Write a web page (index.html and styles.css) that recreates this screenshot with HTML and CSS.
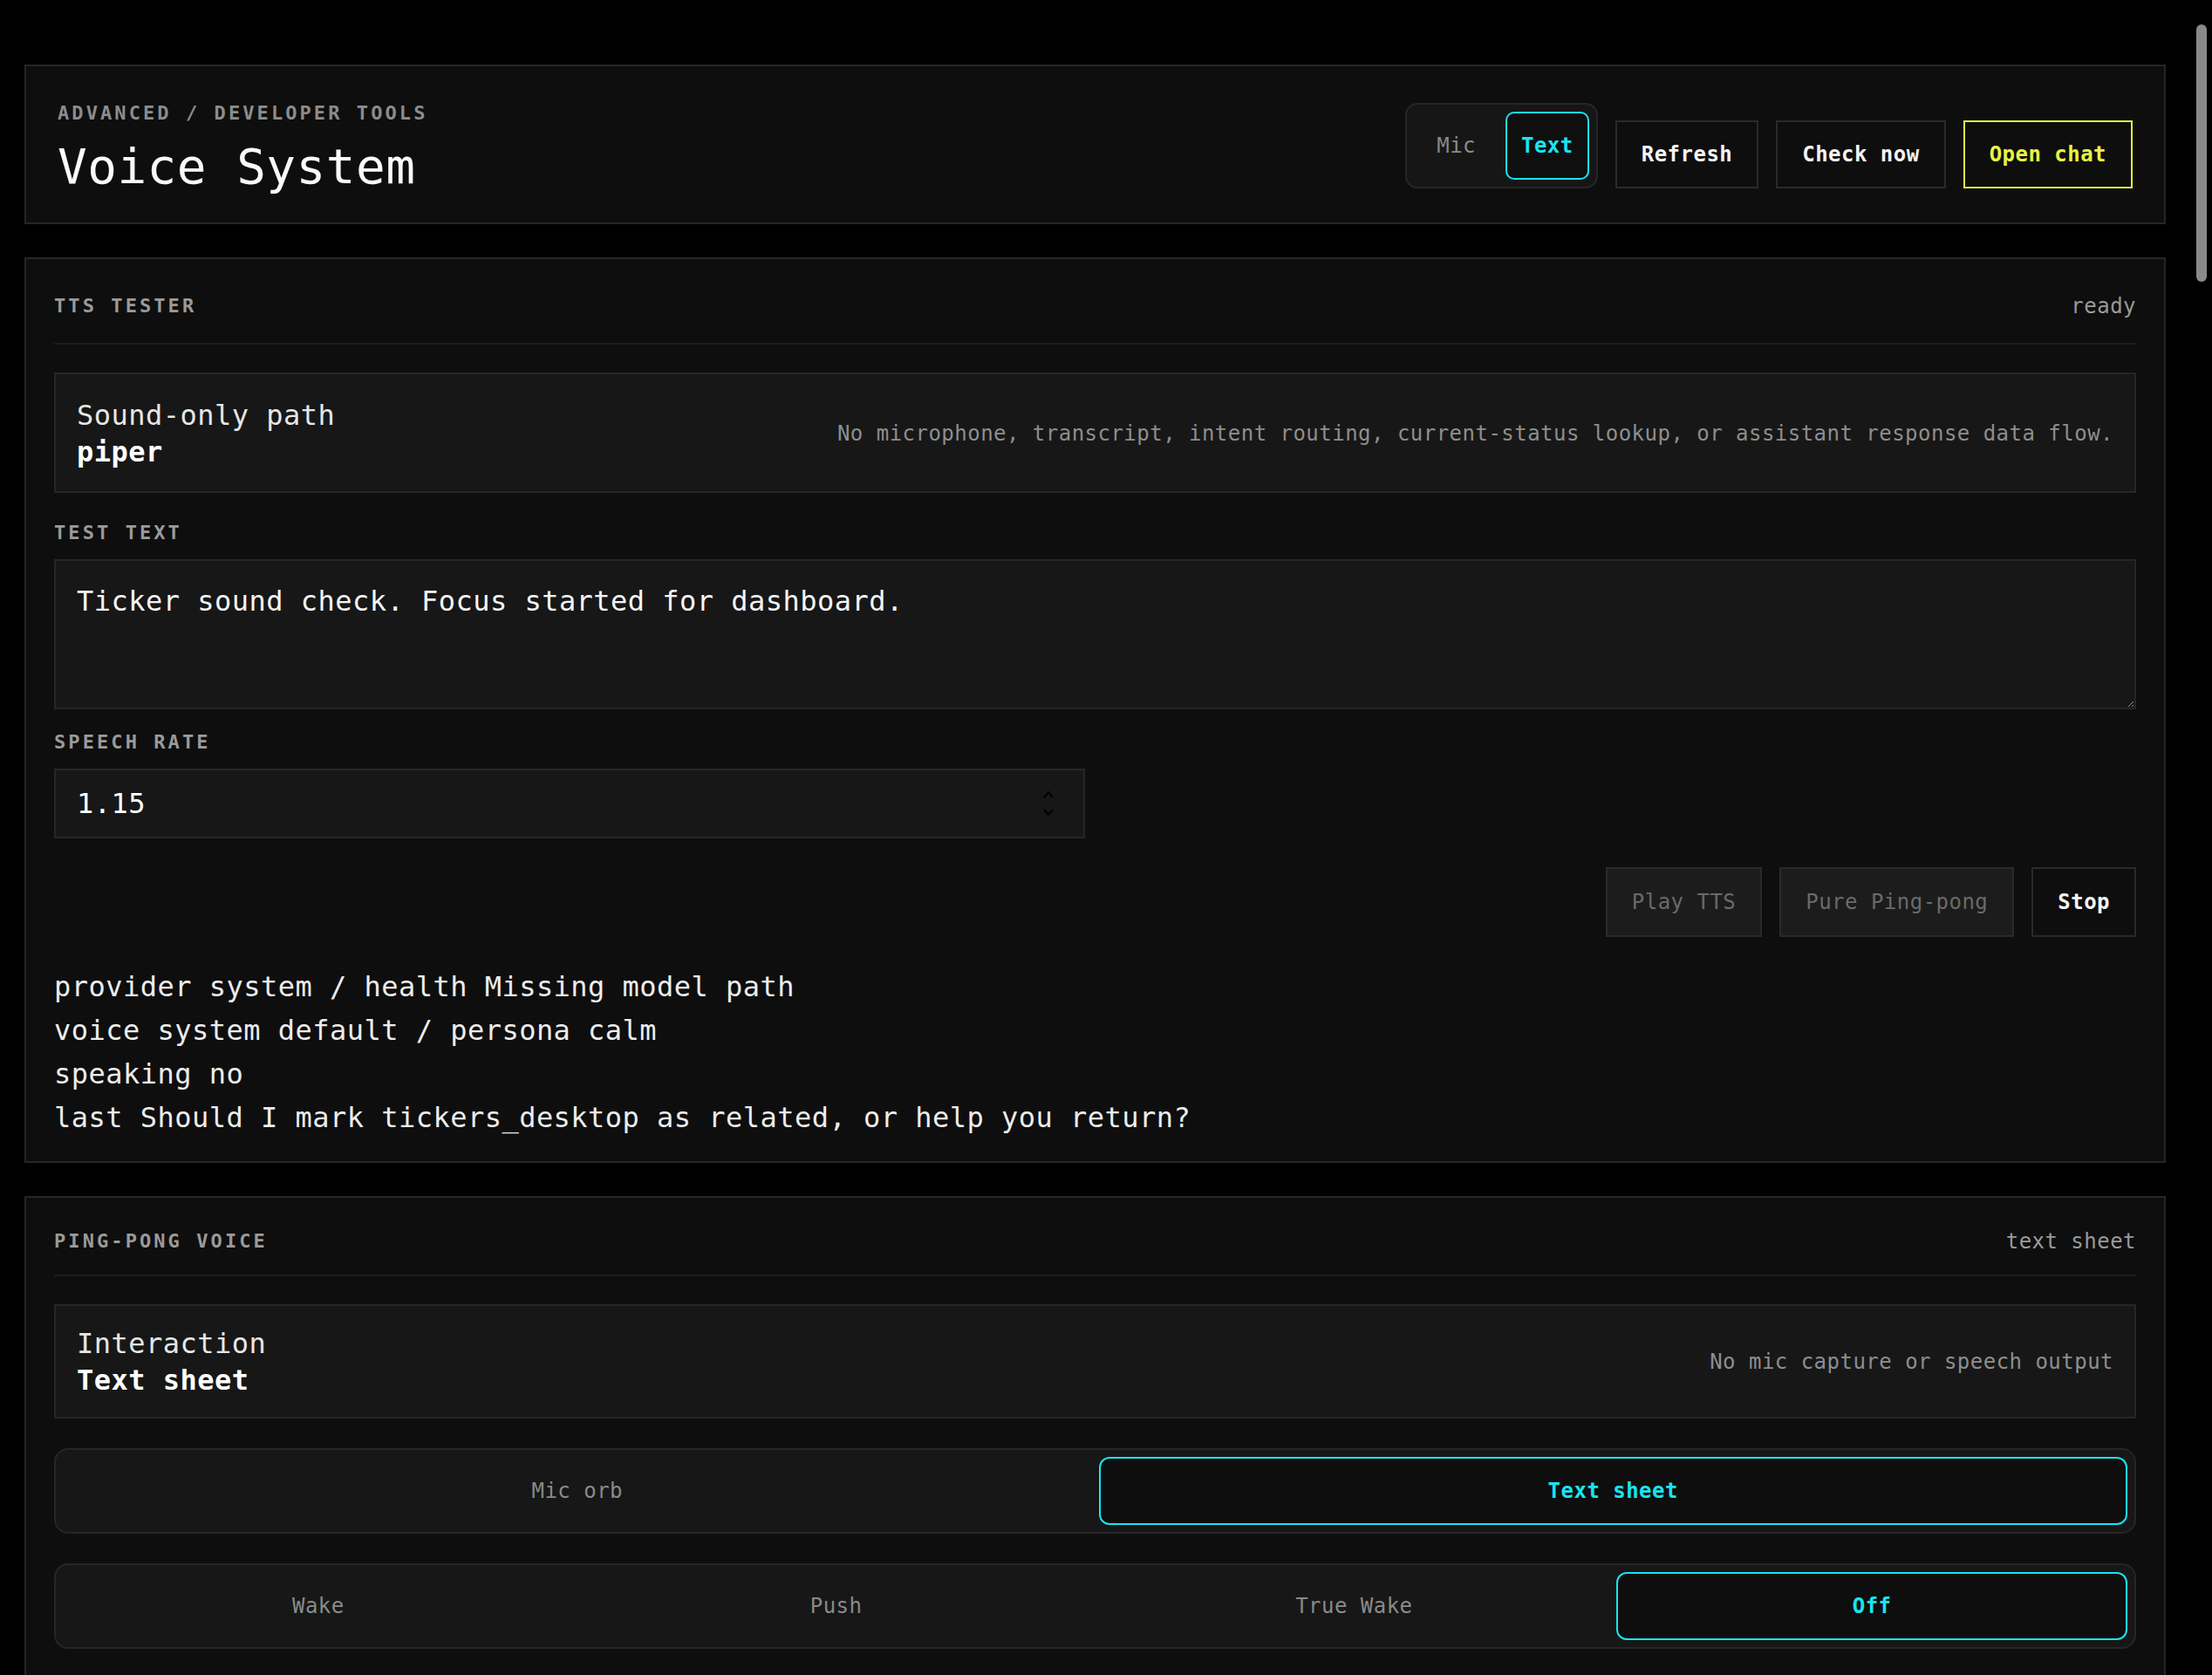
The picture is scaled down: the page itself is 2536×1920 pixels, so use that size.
FILE: index.html
```html
<!DOCTYPE html>
<html lang="en">
  <head>
    <meta charset="UTF-8" />
    <meta name="viewport" content="width=device-width, initial-scale=1.0" />
    <title>Voice System</title>
    <link rel="stylesheet" href="styles.css">
  </head>

  <body>
    <div class="page">
      <!-- 顶部标题栏 -->
      <header class="top">
        <div class="top_title">
          <p class="eyebrow">ADVANCED / DEVELOPER TOOLS</p>
          <h1>Voice System</h1>
        </div>
        <div class="top_actions">
          <div class="switch">
            <button class="switch_item">Mic</button>
            <button class="switch_item current">Text</button>
          </div>
          <button class="btn">Refresh</button>
          <button class="btn">Check now</button>
          <button class="btn btn_accent">Open chat</button>
        </div>
      </header>

      <!-- TTS 测试 -->
      <section class="panel">
        <div class="panel_head">
          <h2>TTS TESTER</h2>
          <span class="panel_state panel_state_tall">ready</span>
        </div>
        <div class="info info_tall">
          <div class="info_name">
            <span>Sound-only path</span>
            <strong>piper</strong>
          </div>
          <span class="info_note">No microphone, transcript, intent routing, current-status lookup, or assistant response data flow.</span>
        </div>
        <label class="field">
          <span class="field_label">TEST TEXT</span>
          <textarea>Ticker sound check. Focus started for dashboard.</textarea>
        </label>
        <div class="field_row">
          <label class="field">
            <span class="field_label">SPEECH RATE</span>
            <span class="number">
              <input type="number" value="1.15" step="0.05" />
              <svg width="14" height="30" viewBox="0 0 14 30" fill="none" stroke="#000" stroke-width="2">
                <path d="M2 8 L7 2 L12 8" />
                <path d="M2 22 L7 28 L12 22" />
              </svg>
            </span>
          </label>
        </div>
        <div class="actions">
          <button class="btn btn_muted" disabled>Play TTS</button>
          <button class="btn btn_muted" disabled>Pure Ping-pong</button>
          <button class="btn">Stop</button>
        </div>
        <div class="status">
          <p>provider system / health Missing model path</p>
          <p>voice system default / persona calm</p>
          <p>speaking no</p>
          <p>last Should I mark tickers_desktop as related, or help you return?</p>
        </div>
      </section>

      <!-- 乒乓语音 -->
      <section class="panel">
        <div class="panel_head">
          <h2>PING-PONG VOICE</h2>
          <span class="panel_state">text sheet</span>
        </div>
        <div class="info info_spaced">
          <div class="info_name">
            <span>Interaction</span>
            <strong>Text sheet</strong>
          </div>
          <span class="info_note">No mic capture or speech output</span>
        </div>
        <div class="seg seg_2">
          <button class="seg_item">Mic orb</button>
          <button class="seg_item current">Text sheet</button>
        </div>
        <div class="seg seg_4">
          <button class="seg_item">Wake</button>
          <button class="seg_item">Push</button>
          <button class="seg_item">True Wake</button>
          <button class="seg_item current">Off</button>
        </div>
      </section>
    </div>

    <div class="scroll_thumb"></div>
  </body>
</html>
```

FILE: styles.css
```css
* {
  margin: 0;
  padding: 0;
  box-sizing: border-box;
}

html {
  scrollbar-width: none;
  color-scheme: dark;
}

html::-webkit-scrollbar {
  display: none;
}

body {
  background-color: #000;
  color: #ececec;
  font-family: "DejaVu Sans Mono", "Liberation Mono", monospace;
  font-size: 32px;
  letter-spacing: 0.015em;
}

button,
input,
textarea {
  font: inherit;
  color: inherit;
  letter-spacing: inherit;
}

button {
  cursor: pointer;
}

.page {
  padding: 74px 53px 60px 28px;
}

/* 顶部 */
.top {
  display: flex;
  justify-content: space-between;
  align-items: center;
  padding: 36px 36px 33px;
  border: 2px solid #262626;
  background-color: #0e0e0e;
  margin-bottom: 38px;
}

.top_title {
  padding-top: 4px;
}

.eyebrow {
  font-size: 22px;
  font-weight: bold;
  line-height: 28px;
  letter-spacing: 0.14em;
  color: #8c8c8c;
  margin-bottom: 16px;
}

h1 {
  font-size: 56px;
  font-weight: normal;
  line-height: 1.1;
  color: #fafafa;
}

.top_actions {
  display: flex;
  align-items: flex-end;
  gap: 20px;
}

.switch {
  display: flex;
  gap: 8px;
  padding: 8px;
  border: 2px solid #262626;
  border-radius: 14px;
  background-color: #161616;
}

.switch_item {
  padding: 21px 24px;
  font-size: 24px;
  line-height: 32px;
  border: 2px solid transparent;
  border-radius: 10px;
  background: none;
  color: #8a8a8a;
}

.switch_item.current {
  padding: 21px 16px;
  border-color: #1ae4f0;
  background-color: #0f0f0f;
  color: #1ae4f0;
  font-weight: bold;
}

.btn {
  padding: 21px 28px;
  font-size: 24px;
  line-height: 32px;
  font-weight: bold;
  border: 2px solid #2a2a2a;
  background-color: #0e0e0e;
  color: #f4f4f4;
}

.btn_accent {
  border-color: #e8f443;
  color: #e8f443;
}

.btn_muted {
  background-color: #1c1c1c;
  color: #6a6a6a;
  font-weight: normal;
  cursor: default;
}

/* 面板 */
.panel {
  padding: 32px 32px 25px;
  border: 2px solid #262626;
  background-color: #0e0e0e;
  margin-bottom: 38px;
}

.panel_head {
  display: flex;
  justify-content: space-between;
  align-items: center;
  padding-bottom: 20px;
  border-bottom: 2px solid #1c1c1c;
  margin-bottom: 32px;
}

h2 {
  font-size: 22px;
  font-weight: bold;
  line-height: 28px;
  letter-spacing: 0.14em;
  color: #9a9a9a;
}

.panel_state {
  font-size: 24px;
  line-height: 36px;
  color: #9a9a9a;
}

.panel_state_tall {
  padding: 4px 0;
}

.info {
  display: flex;
  justify-content: space-between;
  align-items: center;
  padding: 22px 24px 21px;
  border: 2px solid #262626;
  background-color: #171717;
  margin-bottom: 32px;
}

.info_tall {
  padding: 26px 24px 24px;
}

.info_spaced {
  margin-bottom: 34px;
}

.info_name {
  display: flex;
  flex-direction: column;
  line-height: 42px;
  color: #e6e6e6;
}

.info_name strong {
  color: #fff;
}

.info_note {
  font-size: 24px;
  color: #8e8e8e;
}

.field {
  display: block;
}

.field_label {
  display: block;
  font-size: 22px;
  font-weight: bold;
  line-height: 28px;
  letter-spacing: 0.14em;
  color: #9a9a9a;
  margin-bottom: 16px;
}

textarea {
  display: block;
  width: 100%;
  height: 172px;
  padding: 24px;
  line-height: 1.4;
  border: 2px solid #262626;
  background-color: #171717;
  color: #f4f4f4;
  resize: vertical;
  outline: none;
}

.field_row {
  display: grid;
  grid-template-columns: 1fr 1fr;
  gap: 24px;
  margin-top: 24px;
}

.number {
  display: flex;
  align-items: center;
  height: 80px;
  padding: 0 33px 0 24px;
  border: 2px solid #262626;
  background-color: #171717;
}

.number input {
  flex: 1;
  min-width: 0;
  border: 0;
  outline: none;
  background: none;
  color: #fff;
  appearance: textfield;
  -moz-appearance: textfield;
}

.number input::-webkit-inner-spin-button,
.number input::-webkit-outer-spin-button {
  -webkit-appearance: none;
  margin: 0;
}

.actions {
  display: flex;
  justify-content: flex-end;
  gap: 20px;
  margin-top: 33px;
}

.actions .btn {
  padding: 22px 28px;
}

.status {
  margin-top: 32px;
  line-height: 50px;
  color: #ececec;
}

/* 分段选择 */
.seg {
  display: grid;
  gap: 8px;
  padding: 8px;
  border: 2px solid #262626;
  border-radius: 16px;
  background-color: #171717;
  margin-bottom: 34px;
}

.seg_2 {
  grid-template-columns: repeat(2, 1fr);
}

.seg_4 {
  grid-template-columns: repeat(4, 1fr);
}

.seg_item {
  padding: 21px 0;
  font-size: 24px;
  line-height: 32px;
  border: 2px solid transparent;
  border-radius: 12px;
  background: none;
  color: #8a8a8a;
}

.seg_item.current {
  border-color: #1ae4f0;
  background-color: #0e0e0e;
  color: #1ae4f0;
  font-weight: bold;
}

.scroll_thumb {
  position: fixed;
  top: 28px;
  right: 6px;
  width: 12px;
  height: 295px;
  border-radius: 6px;
  background-color: #8a8a8a;
}
```
